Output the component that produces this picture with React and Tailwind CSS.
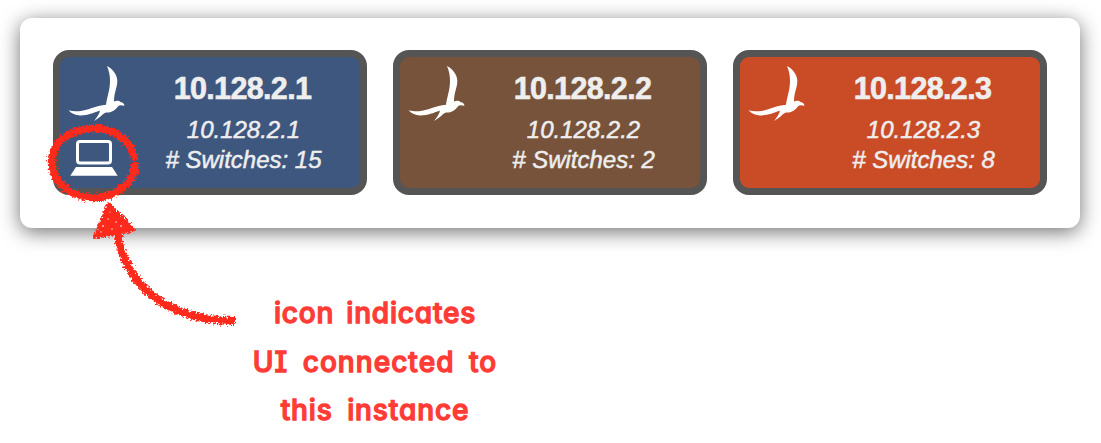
const NODES = [
  { ip: "10.128.2.1", switches: 15, color: "bg-[#3e577f]", active: true },
  { ip: "10.128.2.2", switches: 2, color: "bg-[#77533b]" },
  { ip: "10.128.2.3", switches: 8, color: "bg-[#c94c27]" },
];

function Bird() {
  return (
    <svg className="block h-[56px] w-[58px]" viewBox="0 0 58 56" fill="#fff">
      <path d="M39 0C45 3 49.300 9 49.300 15C49.300 22 46 26 46 35.500C48 34.500 51 34 52.500 36C55 36.300 56.300 38 56.500 39.700C54 39 52 39 50.500 39.700C47.500 44 44 46.700 38 46.600C35 47.500 34 50.500 26 55C28.500 52 30 49.500 31.500 46.500L31.800 44.500C25 47 20 49.500 12 49.400C7.500 49.300 3.500 47.500 0.500 44.300C4 45 7 45.500 11 45.300C19 44.800 28 39.500 38 38.800C39 31 42 24 42 15C42 9 41 5 39 0Z" />
    </svg>
  );
}

function Laptop() {
  return (
    <svg className="block h-[36px] w-[48px]" viewBox="0 0 48 36">
      <rect x="7.500" y="1.500" width="33" height="21.500" rx="2.500" fill="none" stroke="#fff" strokeWidth="3" />
      <path d="M6 27H42L47.700 35.700H0.300Z" fill="#fff" />
    </svg>
  );
}

function NodeCard({ node }) {
  return (
    <div className={`flex h-[145px] w-[314px] rounded-[16px] border-[7px] border-[#555] ${node.color}`}>
      <div className="flex w-[74px] shrink-0 flex-col gap-[18px] pt-[9px] pl-[8px]">
        <Bird />
        {node.active && <div className="pl-[2px]"><Laptop /></div>}
      </div>
      <div className="w-[217px] pt-[14px] text-center text-[#eee]">
        <div className="text-[30.5px] leading-[34px] font-bold tracking-[-0.65px] [-webkit-text-stroke:0.6px_#eee]">{node.ip}</div>
        <div className="pt-[10px] pl-[2px] text-[24px] leading-[30px] italic [-webkit-text-stroke:0.5px_#eee]">
          <div>{node.ip}</div>
          <div># Switches: {node.switches}</div>
        </div>
      </div>
    </div>
  );
}

function Marker() {
  return (
    <svg className="pointer-events-none absolute top-0 left-0 h-[443px] w-[300px]" viewBox="0 0 300 443">
      <defs>
        <filter id="crayon" x="-10%" y="-10%" width="120%" height="120%">
          <feTurbulence type="fractalNoise" baseFrequency="0.45" numOctaves="3" seed="4" result="noise" />
          <feDisplacementMap in="SourceGraphic" in2="noise" scale="7" xChannelSelector="R" yChannelSelector="G" />
        </filter>
      </defs>
      <g filter="url(#crayon)" fill="none" stroke="#ff2a1c">
        <path d="M135 160C132 140 115 128.500 93 128.500C69 128.500 51.500 144 51.500 161C51.500 182 70 197.500 94 197.500C117 197.500 135 182 135 163" strokeWidth="7.500" />
        <path d="M117 232C124 277 157 320 235 321" strokeWidth="8" />
        <path d="M109 204L134 230L95 237Z" fill="#ff2a1c" strokeWidth="3.500" strokeLinejoin="round" />
      </g>
      <g fill="#fff" opacity="0.8">
        <circle cx="108" cy="219" r="0.800" />
        <circle cx="103" cy="226" r="0.900" />
        <circle cx="116" cy="222" r="0.800" />
        <circle cx="112" cy="229" r="0.800" />
        <circle cx="121" cy="226" r="0.900" />
        <circle cx="101" cy="232" r="0.700" />
        <circle cx="110" cy="212" r="0.600" />
      </g>
    </svg>
  );
}

export default function App() {
  return (
    <div className="relative h-[443px] w-[1101px] overflow-hidden bg-white pt-[18px] font-['Liberation_Sans',Arial,sans-serif]">
      <div className="mx-[20px] flex h-[210px] w-[1060px] gap-[26px] rounded-[12px] bg-white pt-[32px] pl-[33px] shadow-[0_4px_20px_rgba(0,0,0,0.56)]">
        {NODES.map((node) => (
          <NodeCard key={node.ip} node={node} />
        ))}
      </div>
      <div className="mt-[61px] ml-[225px] w-[300px] text-center font-['Inter',sans-serif] text-[28px] leading-[48.500px] font-medium whitespace-nowrap text-[#ff3b36] [font-feature-settings:'cv11','cv08'] [-webkit-text-stroke:1.3px_#ff3b36] [stroke-linejoin:round]">
        <div className="tracking-[0.800px] [word-spacing:4px]">icon indicates</div>
        <div className="tracking-[1.050px] [word-spacing:6px]">UI connected to</div>
        <div className="tracking-[0.900px] [word-spacing:6px]">this instance</div>
      </div>
      <Marker />
    </div>
  );
}
